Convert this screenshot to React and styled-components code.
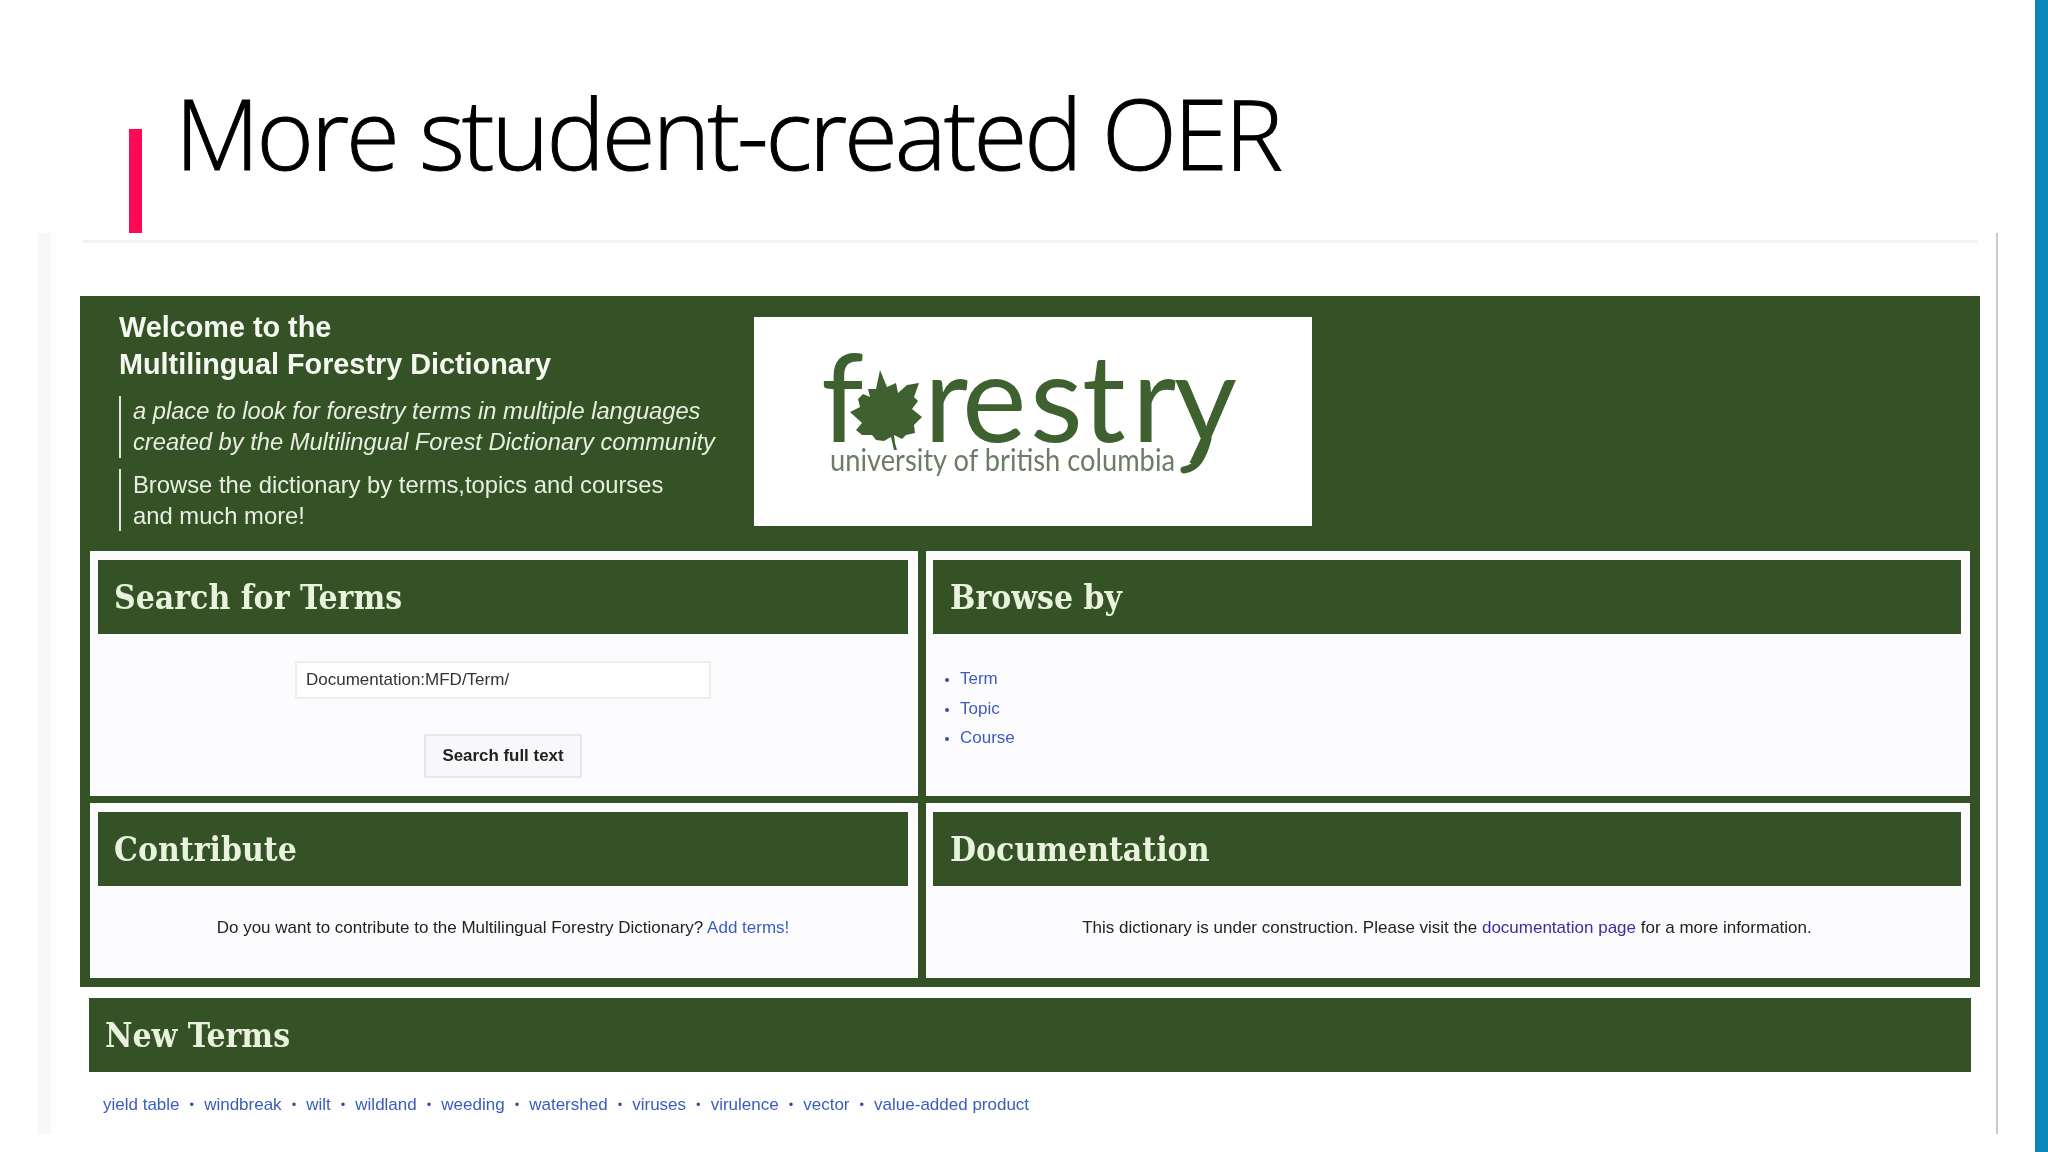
import { Fragment } from "react";
import styled, { createGlobalStyle } from "styled-components";

const GlobalStyle = createGlobalStyle`
  html, body {
    margin: 0;
    padding: 0;
    background: #fff;
  }
  * {
    box-sizing: border-box;
  }
`;

const GREEN = "#345226";

const Slide = styled.div`
  width: 2048px;
  height: 1152px;
  display: flex;
  overflow: hidden;
  background: #fff;
`;

const SlideBody = styled.main`
  flex: 1;
  min-width: 0;
`;

const SideStrip = styled.div`
  width: 13px;
  background: #0b87bd;
`;

const TitleRow = styled.header`
  height: 233px;
  display: flex;
  align-items: flex-end;
  padding-left: 129px;
`;

const AccentBar = styled.span`
  width: 13px;
  height: 104px;
  background: #ff0a52;
`;

const Title = styled.h1`
  align-self: flex-start;
  margin: 72px 0 0 33px;
  font-family: "Open Sans", "Noto Sans", sans-serif;
  font-weight: 300;
  font-size: 98px;
  line-height: 120px;
  letter-spacing: -3.05px;
  color: #000;
  white-space: nowrap;
  -webkit-text-stroke: 1px #000;
  filter: blur(0.4px);
`;

const Frame = styled.section`
  width: 1960px;
  height: 901px;
  margin-left: 38px;
  padding: 7px 16px 0 29px;
  background: #fdfefd;
  border-left: 13px solid #f8f8f9;
  border-right: 2px solid #c9c9c9;
  font-family: "Liberation Sans", Arial, sans-serif;
  filter: blur(0.7px);
`;

const TopRule = styled.div`
  height: 3px;
  margin: 0 2px 53px 3px;
  background: #f2f2f2;
`;

const Banner = styled.div`
  height: 691px;
  padding: 0 11px 0 10px;
  background: ${GREEN};
`;

const BannerTop = styled.div`
  height: 255px;
  display: flex;
  padding: 13px 0 0 29px;
`;

const Intro = styled.div`
  width: 635px;
  color: #fff;
`;

const Welcome = styled.h2`
  margin: 0 0 13px;
  font-size: 28.8px;
  line-height: 37px;
  font-weight: 700;
  color: #f5f8f0;
`;

const Quote = styled.p`
  margin: 0 0 11px;
  padding-left: 12px;
  border-left: 2px solid #dfe8d6;
  font-size: ${(p) => (p.$italic ? 23.7 : 23.8)}px;
  line-height: 31px;
  font-style: ${(p) => (p.$italic ? "italic" : "normal")};
  color: #e8efe1;
  white-space: nowrap;
`;

const LogoBox = styled.div`
  width: 558px;
  height: 209px;
  margin-top: 8px;
  background: #fff;
`;

const LogoSvg = styled.svg`
  display: block;
  width: 100%;
  height: 100%;
`;

const PanelGrid = styled.div`
  display: grid;
  grid-template-columns: 828px 1044px;
  grid-template-rows: 245px 175px;
  column-gap: 8px;
  row-gap: 7px;
`;

const Panel = styled.div`
  padding: ${(p) => (p.$right ? "9px 9px 9px 7px" : "9px 10px 9px 8px")};
  background: #fcfcfe;
`;

const PanelHeading = styled.h3`
  height: 74px;
  margin: 0;
  padding-left: ${(p) => p.$inset}px;
  display: flex;
  align-items: center;
  background: ${GREEN};
  font-family: "DejaVu Serif Condensed", "DejaVu Serif", Georgia, serif;
  font-stretch: condensed;
  font-size: 33.4px;
  font-weight: 700;
  color: #e9f2dc;
`;

const SearchBody = styled.div`
  display: flex;
  flex-direction: column;
  align-items: center;
  padding-top: 27px;
`;

const SearchField = styled.div`
  width: 416px;
  height: 38px;
  padding-left: 9px;
  display: flex;
  align-items: center;
  background: #fff;
  border: 2px solid #eeeeef;
  font-size: 17px;
  color: #333;
`;

const SearchButton = styled.button`
  width: 158px;
  height: 44px;
  margin-top: 35px;
  padding: 0;
  background: #f8f8fa;
  border: 2px solid #e8e8ea;
  border-radius: 2px;
  font-family: inherit;
  font-size: 16.9px;
  font-weight: 700;
  color: #222;
`;

const BrowseList = styled.ul`
  margin: 30px 0 0;
  padding: 0 0 0 27px;
  font-size: 17px;
  line-height: 29.5px;
  color: #3a4f9c;

  li::marker {
    font-size: 14px;
  }
`;

const Link = styled.a`
  color: ${(p) => (p.$visited ? "#3a2ea0" : "#3b5dbd")};
  text-decoration: none;
`;

const PanelText = styled.p`
  margin: 30px 0 0;
  text-align: center;
  font-size: 17px;
  line-height: 24px;
  color: #222;
`;

const NewTerms = styled.div`
  margin: 11px 9px 0 9px;
`;

const TermRow = styled.div`
  display: flex;
  align-items: center;
  gap: 10px;
  margin: 21px 0 0 14px;
  font-size: 17px;
  line-height: 24px;
  color: #3a4f9c;
`;

const Dot = styled.span`
  font-size: 13px;
`;

const leaf =
  "126,53 133,70 142,66 144,76 153,68 165,66 160,80 164,84 158,92 168,100 160,108 161,116 152,118 148,122 140,118 141,126 143,133 140,133 137,120 130,124 122,123 118,118 108,118 102,113 108,106 96,95 106,90 104,82 109,77 116,80 114,72 122,72";

const ForestryLogo = () => (
  <LogoSvg viewBox="0 0 558 209">
    <g fontFamily="Lato, 'Open Sans', sans-serif" fill="#3f6130">
      <text x="67" y="125" fontSize="122">
        f
      </text>
      <polygon points={leaf} />
      <text x="170 208 276 328 378 420" y="125" fontSize="122">
        restry
      </text>
      <path
        d="M454 122 C449 142 442 151 430 153"
        fill="none"
        stroke="#3f6130"
        strokeWidth="7"
        strokeLinecap="round"
      />
      <text
        x="76"
        y="154"
        fontSize="30"
        fill="#6c7c66"
        textLength="345"
        lengthAdjust="spacingAndGlyphs"
      >
        university of british columbia
      </text>
    </g>
  </LogoSvg>
);

const terms = [
  "yield table",
  "windbreak",
  "wilt",
  "wildland",
  "weeding",
  "watershed",
  "viruses",
  "virulence",
  "vector",
  "value-added product",
];

export default function App() {
  return (
    <>
      <GlobalStyle />
      <Slide>
        <SlideBody>
          <TitleRow>
            <AccentBar />
            <Title>More student-created OER</Title>
          </TitleRow>
          <Frame>
            <TopRule />
            <Banner>
              <BannerTop>
                <Intro>
                  <Welcome>
                    Welcome to the
                    <br />
                    Multilingual Forestry Dictionary
                  </Welcome>
                  <Quote $italic>
                    a place to look for forestry terms in multiple languages
                    <br />
                    created by the Multilingual Forest Dictionary community
                  </Quote>
                  <Quote>
                    Browse the dictionary by terms,topics and courses
                    <br />
                    and much more!
                  </Quote>
                </Intro>
                <LogoBox>
                  <ForestryLogo />
                </LogoBox>
              </BannerTop>
              <PanelGrid>
                <Panel>
                  <PanelHeading $inset={16}>Search for Terms</PanelHeading>
                  <SearchBody>
                    <SearchField>Documentation:MFD/Term/</SearchField>
                    <SearchButton>Search full text</SearchButton>
                  </SearchBody>
                </Panel>
                <Panel $right>
                  <PanelHeading $inset={17}>Browse by</PanelHeading>
                  <BrowseList>
                    <li>
                      <Link>Term</Link>
                    </li>
                    <li>
                      <Link>Topic</Link>
                    </li>
                    <li>
                      <Link>Course</Link>
                    </li>
                  </BrowseList>
                </Panel>
                <Panel>
                  <PanelHeading $inset={16}>Contribute</PanelHeading>
                  <PanelText>
                    Do you want to contribute to the Multilingual Forestry
                    Dictionary? <Link>Add terms!</Link>
                  </PanelText>
                </Panel>
                <Panel $right>
                  <PanelHeading $inset={17}>Documentation</PanelHeading>
                  <PanelText>
                    This dictionary is under construction. Please visit the{" "}
                    <Link $visited>documentation page</Link> for a more
                    information.
                  </PanelText>
                </Panel>
              </PanelGrid>
            </Banner>
            <NewTerms>
              <PanelHeading $inset={16}>New Terms</PanelHeading>
              <TermRow>
                {terms.map((term, i) => (
                  <Fragment key={term}>
                    {i > 0 && <Dot>•</Dot>}
                    <Link>{term}</Link>
                  </Fragment>
                ))}
              </TermRow>
            </NewTerms>
          </Frame>
        </SlideBody>
        <SideStrip />
      </Slide>
    </>
  );
}
